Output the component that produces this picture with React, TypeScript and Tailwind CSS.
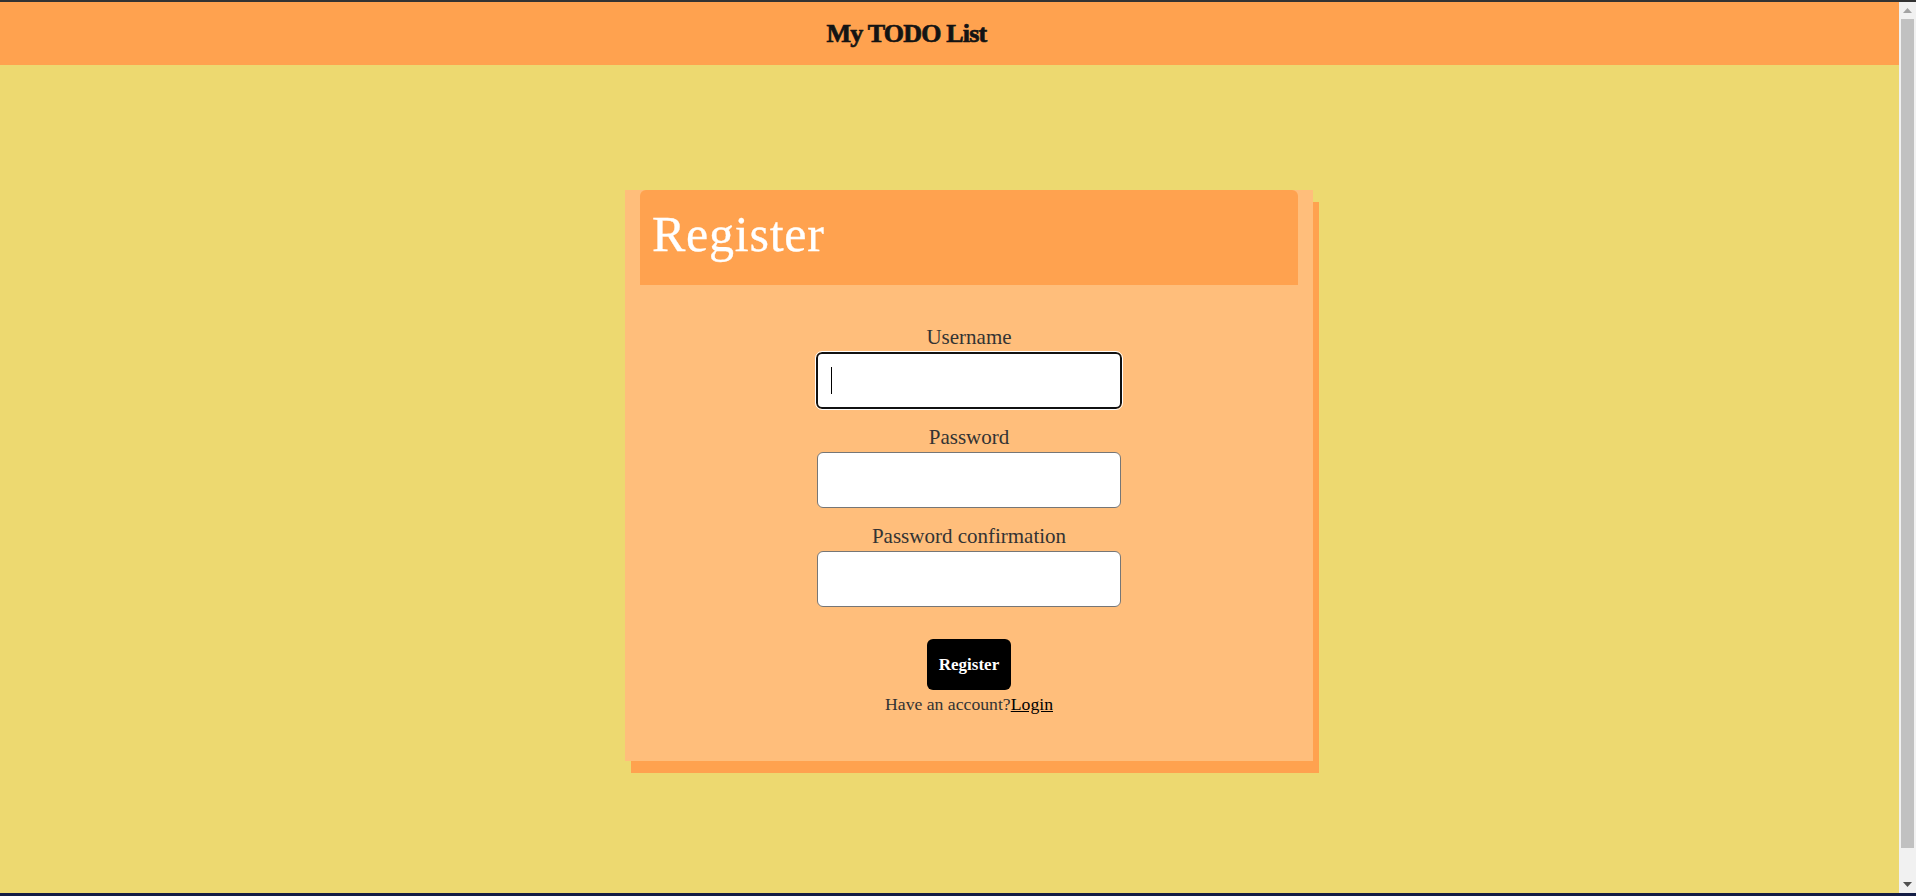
import React from "react";

const serif = { fontFamily: '"Liberation Serif", "Times New Roman", serif' };

function Field({ label, focused }: { label: string; focused?: boolean }) {
  return (
    <div className="flex flex-col items-center">
      <label className="text-[21px] leading-[24px] text-[#333333]">{label}</label>
      {focused ? (
        <div className="relative mt-[3px] h-[57px] w-[306px] rounded-[6px] border-2 border-[#111111] bg-white outline outline-1 outline-white">
          <span className="absolute left-[13px] top-[13px] h-[27px] w-[1px] bg-black" />
        </div>
      ) : (
        <input
          type="password"
          className="mt-[3px] h-[56px] w-[304px] rounded-[6px] border border-[#767676] bg-white px-3 outline-none"
        />
      )}
    </div>
  );
}

function Scrollbar() {
  return (
    <div className="flex w-[17px] shrink-0 flex-col items-center bg-[#f1f1f1]">
      <div className="flex h-[17px] w-full items-center justify-center">
        <svg width="9" height="5" viewBox="0 0 9 5">
          <path d="M0 5 L4.5 0 L9 5 Z" fill="#a3a3a3" />
        </svg>
      </div>
      <div className="w-full flex-1 px-[2px] pb-[2px]">
        <div className="h-[97%] w-full bg-[#c1c1c1]" />
      </div>
      <div className="flex h-[17px] w-full items-center justify-center">
        <svg width="9" height="5" viewBox="0 0 9 5">
          <path d="M0 0 L9 0 L4.5 5 Z" fill="#505050" />
        </svg>
      </div>
    </div>
  );
}

export default function App() {
  return (
    <div style={serif} className="flex h-[896px] flex-col overflow-hidden bg-[#edd970]">
      <div className="h-[2px] shrink-0 bg-[#333333]" />
      <div className="flex min-h-0 flex-1">
        <div className="flex min-w-0 flex-1 flex-col">
          <header className="flex h-[63px] shrink-0 items-center justify-center bg-[#ffa24f] pr-[86px]">
            <h1 className="text-[26px] font-bold tracking-[-0.8px] text-[#141414] [-webkit-text-stroke:0.7px_#141414]">
              My TODO List
            </h1>
          </header>
          <main className="flex flex-1 justify-center bg-[#edd970] pl-[39px] pt-[125px]">
            <div className="h-fit w-[688px] bg-[#ffbe7b] pb-[47px] shadow-[6px_12px_0_0_#ffa24f]">
              <div className="mx-[15px] flex h-[95px] items-center rounded-t-[6px] bg-[#ffa24f] pb-[8px] pl-[12px]">
                <h2 className="text-[50px] leading-none tracking-[0.75px] text-white [-webkit-text-stroke:0.3px_#ffffff]">
                  Register
                </h2>
              </div>
              <form className="mt-[40px] flex flex-col items-center" onSubmit={(e) => e.preventDefault()}>
                <div className="flex flex-col gap-[16px]">
                  <Field label="Username" focused />
                  <Field label="Password" />
                  <Field label="Password confirmation" />
                </div>
                <button
                  type="submit"
                  className="mt-[32px] h-[51px] rounded-[6px] bg-black px-[12px] text-[17px] font-bold text-white"
                >
                  Register
                </button>
                <p className="mt-[4px] text-[17.7px] leading-[20px] text-[#333333]">
                  Have an account?<a href="#" className="text-black underline">Login</a>
                </p>
              </form>
            </div>
          </main>
        </div>
        <Scrollbar />
      </div>
      <div className="h-[3px] shrink-0 bg-[#141d45]" />
    </div>
  );
}
